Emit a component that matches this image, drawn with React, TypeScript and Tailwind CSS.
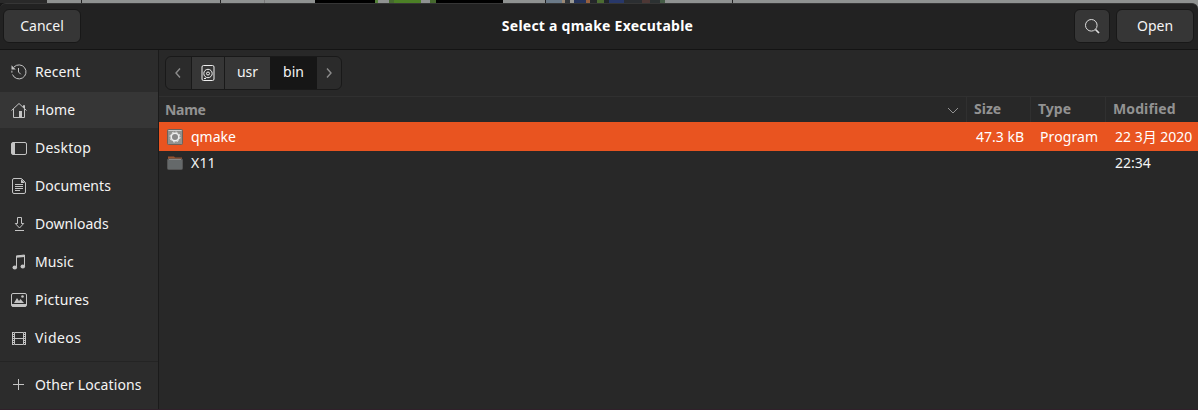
import type { ReactNode } from 'react';

const strip = [
  [0, 47, '#292929'], [47, 34, '#8f9291'], [81, 1, '#222'], [82, 138, '#8f9291'], [220, 1, '#222'],
  [221, 43, '#8f9291'], [264, 1, '#777'], [265, 50, '#8f9291'], [315, 60, '#000'], [375, 3, '#56843a'],
  [378, 11, '#8f9291'], [389, 5, '#46692f'], [394, 27, '#4c8026'], [421, 9, '#8f9291'], [430, 6, '#46692f'], [436, 67, '#000'],
  [503, 42, '#8f9291'], [545, 1, '#222'], [546, 16, '#6b7a88'], [562, 3, '#9a8874'], [565, 5, '#30353a'],
  [570, 4, '#9a9a95'], [574, 12, '#25335a'], [586, 4, '#96603f'], [590, 7, '#25272a'], [597, 7, '#4c6c32'],
  [604, 5, '#22252a'], [609, 15, '#28386a'], [624, 18, '#2b2e31'], [642, 8, '#4d3735'], [650, 10, '#2c3132'], [660, 5, '#455c46'],
  [665, 67, '#8f9291'], [732, 1, '#222'], [733, 465, '#8f9291'],
] as const;

function Icon({ children }: { children: ReactNode }) {
  return (
    <svg viewBox="0 0 16 16" className="h-4 w-4 shrink-0" fill="none" stroke="#c4c4c4" strokeWidth="1">
      {children}
    </svg>
  );
}

const places = [
  { label: 'Recent', spacing: 'tracking-[0.1px]', icon: <Icon><path d="M3 3A7 7 0 1 1 1.5 10.5M7.5 4v4l2.3 2.3" /><path d="M.9 8.7v-2" /><path d="M.5 1.2v4.3h4.3z" fill="#c4c4c4" stroke="none" /></Icon> },
  { label: 'Home', spacing: 'tracking-[0.1px]', icon: <Icon><path d="m.5 8.5 7.5-7 7.5 7M2.5 7v8.5h11V7M12.5 5.5v-2h1v3" /><path d="M8 9h3v6H8z" fill="#c4c4c4" stroke="none" /></Icon> },
  { label: 'Desktop', spacing: 'tracking-[0.25px]', icon: <Icon><rect x=".5" y="2.5" width="15" height="12" rx="1.5" /><path d="M1 3h3v11H1z" fill="#c4c4c4" stroke="none" /></Icon> },
  { label: 'Documents', spacing: 'tracking-[0.05px]', icon: <Icon><path d="M3 .5h7.5l4 4V14q0 1.5-1.5 1.5H3Q1.5 15.5 1.5 14V2Q1.5.5 3 .5M4 6.5h8M4 8.5h8M4 10.5h8M4 12.5h5" /><path d="M10 1v4h4z" fill="#c4c4c4" stroke="none" /></Icon> },
  { label: 'Downloads', spacing: 'tracking-[0.05px]', icon: <Icon><path d="M6.5 1.5h4v6h2.2L8.5 12 4.3 7.5h2.2zM4 14.5h9" /></Icon> },
  { label: 'Music', spacing: 'tracking-[0.1px]', icon: <Icon><path d="M5.5 13V2l8-1v11" /><path d="M5 1.8 14 1v2l-9 .8z" fill="#c4c4c4" stroke="none" /><ellipse cx="3.8" cy="13.5" rx="2.3" ry="1.9" fill="#c4c4c4" stroke="none" /><ellipse cx="11.8" cy="12.5" rx="2.3" ry="1.9" fill="#c4c4c4" stroke="none" /></Icon> },
  { label: 'Pictures', spacing: 'tracking-[0.2px]', icon: <Icon><rect x=".5" y="1.5" width="15" height="13" rx="1.5" /><path d="M1 12h14v2.5H1zM3 11l3-5 2 3 1.5-2L13 11z" fill="#c4c4c4" stroke="none" /><circle cx="11.5" cy="4.5" r="1.3" fill="#c4c4c4" stroke="none" /></Icon> },
  { label: 'Videos', spacing: 'tracking-[0.45px]', icon: <Icon><path d="M1.5 2v13M14.5 2v13M3.5 2.5h9v12h-9zM3.5 8.5h9" /><path d="M2.5 2v13M13.5 2v13" strokeDasharray="1 1" /></Icon> },
];

function Header() {
  return (
    <header className="flex h-[47px] shrink-0 items-start justify-between rounded-t-[6px] border-b border-t border-b-[#141414] border-t-[#363636] bg-[#222] pl-[3px] pr-[4px] pt-[5px]">
      <button className="h-[34px] w-[78px] rounded-[6px] border border-[#181818] bg-[#363636] pb-[1px]">Cancel</button>
      <h1 className="pl-[40px] pt-[7px] text-[14px] font-bold leading-5 tracking-[0.24px] text-white">Select a qmake Executable</h1>
      <div className="flex gap-[6px]">
        <button aria-label="Search" className="flex h-[34px] w-[36px] items-center justify-center rounded-[6px] border border-[#181818] bg-[#363636]">
          <Icon><circle cx="7.3" cy="7.3" r="5.8" stroke="#ddd" /><path d="m11.5 11.5 3.5 3.5" stroke="#ddd" strokeWidth="1.7" /></Icon>
        </button>
        <button className="h-[34px] w-[78px] rounded-[6px] border border-[#181818] bg-[#363636] pb-[1px]">Open</button>
      </div>
    </header>
  );
}

export default function App() {
  return (
    <div className="flex h-[410px] w-[1198px] flex-col overflow-hidden bg-[#282828] font-['Noto_Sans','Noto_Sans_CJK_JP',sans-serif] text-[14px] leading-5 text-[#f4f4f4]">
      <div className="flex h-[3px] shrink-0">
        {strip.map(([x, w, c]) => <div key={x} className="h-[3px] shrink-0" style={{ width: w, backgroundColor: c }} />)}
      </div>
      <div className="shrink-0 bg-linear-to-r from-[#181818] from-50% to-[#8f9291] to-50%"><Header /></div>
      <div className="flex min-h-0 flex-1">
        <aside className="flex w-[159px] shrink-0 flex-col border-r border-[#1b1b1b] bg-[#2c2c2c] pt-[3px]">
          {places.map(p => (
            <div key={p.label} className={`flex h-[38px] shrink-0 items-center gap-2 pl-[11px] ${p.label === 'Home' ? 'border-y border-[#2c2c2c] bg-[#363636]' : ''}`}>
              {p.icon}<span className={p.spacing}>{p.label}</span>
            </div>
          ))}
          <div className="mt-[4px] h-px shrink-0 bg-[#242424]" />
          <div className="flex h-[46px] shrink-0 items-center gap-2 pl-[11px]">
            <Icon><path d="M2 7.5h11M7.5 2v11" /></Icon><span className="tracking-[0.12px]">Other Locations</span>
          </div>
        </aside>
        <main className="min-w-0 flex-1">
          <nav className="ml-[6px] mt-[6px] flex h-[34px] w-[177px] overflow-hidden rounded-[6px] border border-[#191919] bg-[#2b2b2b]">
            <div className="flex w-[25px] items-center justify-center pr-[2px]"><Icon><path d="m10 3.5-4 4.5 4 4.5" stroke="#8c8c8c" strokeWidth="1.4" /></Icon></div>
            <div className="flex w-[34px] items-center justify-center border-x border-[#191919] bg-[#363636]"><Icon><rect x="2" y=".5" width="12" height="15" rx="1.5" stroke="#eee" /><circle cx="8" cy="8.5" r="4.2" stroke="#eee" /><circle cx="8" cy="8.5" r="1.5" stroke="#eee" /><path d="M4 13.5h2" stroke="#eee" /></Icon></div>
            <div className="w-[45px] bg-[#363636] pt-[5px] text-center">usr</div>
            <div className="w-[47px] bg-[#161616] pt-[5px] text-center">bin</div>
            <div className="flex flex-1 items-center justify-center"><Icon><path d="m6 3.5 4 4.5-4 4.5" stroke="#8c8c8c" strokeWidth="1.4" /></Icon></div>
          </nav>
          <div className="mt-[6px] grid h-[26px] grid-cols-[808px_64px_75px_92px] border-t border-[#303030] text-[14px] font-bold leading-[24px] text-[#929292]">
            <div className="flex items-center justify-between border-r border-[#303030] pl-[6px] pr-[5px]"><span className="tracking-[-0.3px]">Name</span><Icon><path d="m3 6 5 5 5-5" stroke="#929292" /></Icon></div>
            <div className="border-r border-[#303030] pl-[7px]">Size</div>
            <div className="border-r border-[#303030] pl-[7px]">Type</div>
            <div className="pl-[7px] tracking-[0.1px]">Modified</div>
          </div>
          <div className="grid h-[29px] grid-cols-[808px_64px_75px_92px] items-center bg-[#e95420] text-white">
            <div className="flex items-center gap-2 pl-[8px]">
              <Icon><rect x=".5" y=".5" width="15" height="15" rx="1" fill="#91918e" stroke="#6b625b" /><path d="M1.5 1.5h13" stroke="#ccc" /><circle cx="8" cy="8" r="3.8" fill="#888" stroke="#eee" strokeWidth="1.6" /><circle cx="8" cy="8" r="5" stroke="#eee" strokeWidth="1" strokeDasharray="1.9 2.03" /></Icon>
              <span>qmake</span>
            </div>
            <span className="pl-[9px]">47.3 kB</span><span className="pl-[9px] tracking-[0.1px]">Program</span><span className="whitespace-nowrap pl-[9px]">22 3月 2020</span>
          </div>
          <div className="grid h-[24px] grid-cols-[808px_64px_75px_92px] items-center">
            <div className="flex items-center gap-2 pl-[8px]">
              <Icon><path d="M1 1.5h6l1 1h7v4H1z" fill="#99532f" stroke="none" /><rect x=".5" y="4" width="15" height="10.5" rx="1" fill="#65696a" stroke="#555" /><path d="M2 4.5h12" stroke="#858585" /></Icon>
              <span className="tracking-[0.2px]">X11</span>
            </div>
            <span /><span /><span className="pl-[9px]">22:34</span>
          </div>
        </main>
      </div>
      <div className="h-px shrink-0 bg-[#30202a]" />
    </div>
  );
}
